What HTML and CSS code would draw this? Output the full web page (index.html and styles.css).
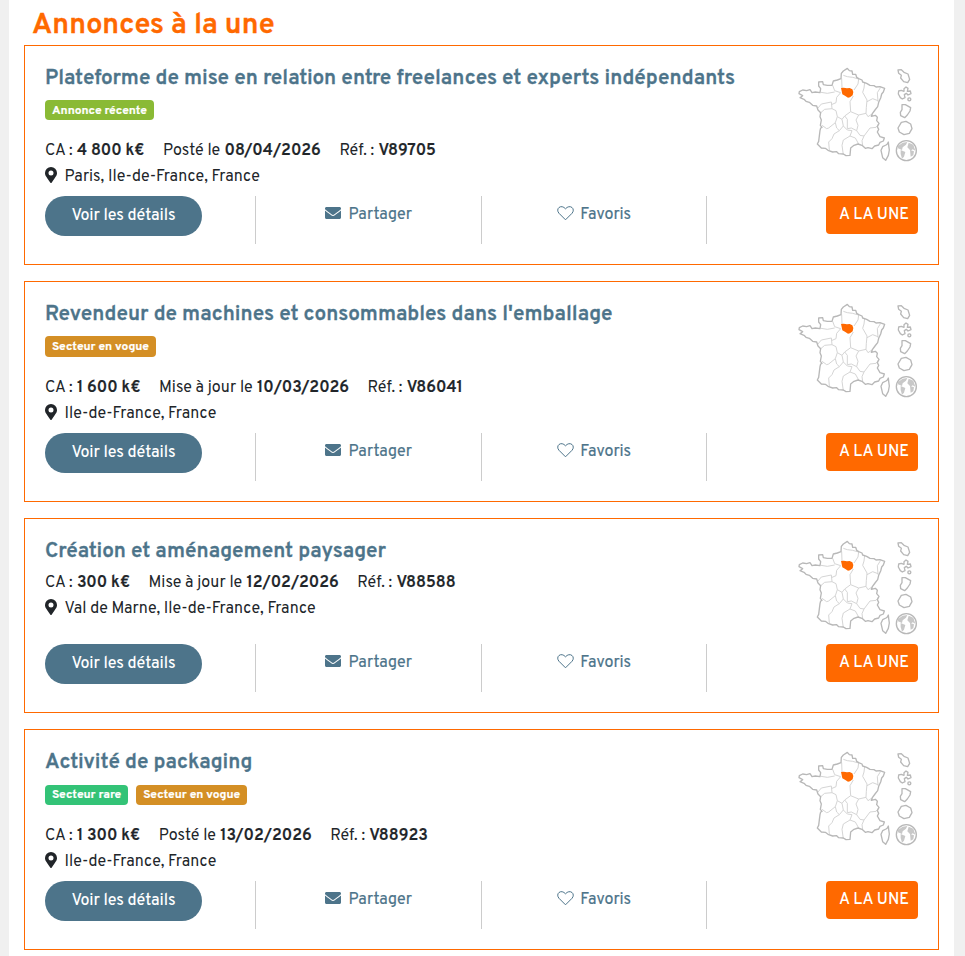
FILE: index.html
```
<!DOCTYPE html>
<html lang="fr">
<head>
    <meta charset="UTF-8">
    <meta name="viewport" content="width=device-width, initial-scale=1.0">
    <title>Annonces à la une</title>
    <link rel="stylesheet" href="styles.css">
</head>
<body>
    <svg class="sprite" aria-hidden="true">
        <symbol id="map" viewBox="24 15 360 300">
            <g class="regions">
                <path d="M160 46L172 50 188 52 206 57 204 72 192 90M155 56L156 84M224 67L222 84 218 97 231 120 229 142 228 160M231 125L248 116 264 122M272 82L262 98 264 125M190 108L180 125 182 155 206 165 228 160 234 170 246 162"/>
                <path d="M128 76L134 92 152 98 140 112 138 128 124 134M93 97L112 100 134 96M84 144L94 132 124 126 126 146 104 148 90 160M126 146L138 152 142 170 136 188 116 204 110 206 96 196M142 170L156 178 164 168 182 155M156 178L160 198 148 212 140 204 136 188M164 168L172 178 172 206 184 204 200 212 204 196 198 180 206 165M148 212L132 222 126 236 116 246 118 270M160 198L172 210 186 212 180 228 160 240 156 256 160 284M200 212L210 226 222 228 216 242 218 256M222 228L240 204 258 202 266 192M180 228L196 234 206 252"/>
            </g>
            <g class="coast">
                <path d="M153 56L154 40 160 33 172 25 178 32 186 33 188 43 197 43 200 52 206 56 216 60 218 66 230 70 240 76 252 77 258 81 270 80 284 85 280 96 275 102 272 114 266 127 263 140 255 150 247 161 244 169 256 166 262 172 260 182 267 190 262 200 266 208 262 216 270 230 283 234 280 243 270 247 266 255 254 258 246 266 234 263 226 265 216 256 204 252 192 256 182 264 180 286 168 287 160 282 146 281 140 275 128 276 114 271 106 265 94 264 82 252 86 244 90 212 92 204 96 202 91 196 94 180 90 170 92 158 84 150 80 138 68 136 58 127 48 124 42 118 30 113 38 107 27 101 28 95 38 90 50 92 60 89 66 98 76 96 90 98 92 86 86 78 86 66 98 65 100 74 112 76 126 76 130 63 142 60z"/>
                <path d="M292 252l3-6 1 10 2 14-3 16-8 15-9-8-5-22 5-11 10-5z"/>
                <path d="M324 30l10-1 8 8 12 5 5 16-6 10-12-3-9-11 2-8-8-6z"/>
                <path d="M342 94l0-8 6-5 6 4-2 9 9-1 2 8-9 4-5-5-6 4 2 9-8 4-6-4-6-11 1-9 8-2z"/>
                <circle cx="358" cy="118" r="4.500"/>
                <path d="M336 134l10 0 16 9-2 10-8 12-8 8-12-6-1-10 5-8z"/>
                <path d="M334 187l14-3 14 8 4 14-8 14-16 4-14-8-4-12z"/>
                <circle cx="349" cy="272" r="30"/>
            </g>
            <path class="land" d="M324 258l14-10 14-2-4 8-10 8-2 8-12-5zM332 270l14 6-4 14-6 6-4-14zM356 248l14 6 6 18-8-4-6 4-10-10zM360 270l12 4-2 12-8 4z"/>
            <path class="idf" d="M153 84l8-1 10 2 8-1 8 4 3 8-2 10-8 6-6 1-8-5-9-5-2-10z"/>
        </symbol>
        <symbol id="pin" viewBox="0 0 384 512">
            <path d="M172 502C27 291 0 270 0 192a192 192 0 1 1 384 0c0 78-27 99-172 310-9 13-31 13-40 0zM192 272a80 80 0 1 0 0-160 80 80 0 0 0 0 160z"/>
        </symbol>
        <symbol id="envelope" viewBox="0 0 512 384">
            <path d="M0 48C0 21 21 0 48 0h416c27 0 48 21 48 48v24C470 106 430 137 344 201c-21 16-58 54-88 54s-67-38-88-54C82 137 42 106 0 72zM0 112c40 32 90 70 149 113 25 19 66 62 107 62s82-43 107-62c59-43 109-81 149-113v224c0 27-21 48-48 48H48c-27 0-48-21-48-48z"/>
        </symbol>
        <symbol id="heart" viewBox="0 0 17 15">
            <path d="M8.5 13.8L2 7.300C.2 5.300.4 2.800 2 1.500 4 0 6.400.5 8.500 2.800 10.600.5 13 0 15 1.500c1.600 1.300 1.800 3.800 0 5.800z"/>
        </symbol>
    </svg>

    <main>
        <h1>Annonces à la une</h1>

        <article class="card">
            <div class="card-top">
                <div class="card-info">
                    <h2>Plateforme de mise en relation entre freelances et experts indépendants</h2>
                    <div class="badges"><span class="badge recent">Annonce récente</span></div>
                    <p class="meta"><span>CA : <b>4 800 k€</b></span><span>Posté le <b>08/04/2026</b></span><span>Réf. : <b>V89705</b></span></p>
                    <p class="place"><svg class="pin"><use href="#pin"/></svg>Paris, Ile-de-France, France</p>
                </div>
                <svg class="map"><use href="#map"/></svg>
            </div>
            <div class="actions">
                <div><a class="details">Voir les détails</a></div>
                <div class="action"><svg class="envelope"><use href="#envelope"/></svg>Partager</div>
                <div class="action"><svg class="heart"><use href="#heart"/></svg>Favoris</div>
                <div class="last"><span class="featured">A LA UNE</span></div>
            </div>
        </article>

        <article class="card tall">
            <div class="card-top">
                <div class="card-info">
                    <h2>Revendeur de machines et consommables dans l'emballage</h2>
                    <div class="badges"><span class="badge vogue">Secteur en vogue</span></div>
                    <p class="meta"><span>CA : <b>1 600 k€</b></span><span>Mise à jour le <b>10/03/2026</b></span><span>Réf. : <b>V86041</b></span></p>
                    <p class="place"><svg class="pin"><use href="#pin"/></svg>Ile-de-France, France</p>
                </div>
                <svg class="map"><use href="#map"/></svg>
            </div>
            <div class="actions">
                <div><a class="details">Voir les détails</a></div>
                <div class="action"><svg class="envelope"><use href="#envelope"/></svg>Partager</div>
                <div class="action"><svg class="heart"><use href="#heart"/></svg>Favoris</div>
                <div class="last"><span class="featured">A LA UNE</span></div>
            </div>
        </article>

        <article class="card short">
            <div class="card-top">
                <div class="card-info">
                    <h2>Création et aménagement paysager</h2>
                    <p class="meta"><span>CA : <b>300 k€</b></span><span>Mise à jour le <b>12/02/2026</b></span><span>Réf. : <b>V88588</b></span></p>
                    <p class="place"><svg class="pin"><use href="#pin"/></svg>Val de Marne, Ile-de-France, France</p>
                </div>
                <svg class="map"><use href="#map"/></svg>
            </div>
            <div class="actions">
                <div><a class="details">Voir les détails</a></div>
                <div class="action"><svg class="envelope"><use href="#envelope"/></svg>Partager</div>
                <div class="action"><svg class="heart"><use href="#heart"/></svg>Favoris</div>
                <div class="last"><span class="featured">A LA UNE</span></div>
            </div>
        </article>

        <article class="card tall">
            <div class="card-top">
                <div class="card-info">
                    <h2>Activité de packaging</h2>
                    <div class="badges two"><span class="badge rare">Secteur rare</span><span class="badge vogue">Secteur en vogue</span></div>
                    <p class="meta"><span>CA : <b>1 300 k€</b></span><span>Posté le <b>13/02/2026</b></span><span>Réf. : <b>V88923</b></span></p>
                    <p class="place"><svg class="pin"><use href="#pin"/></svg>Ile-de-France, France</p>
                </div>
                <svg class="map"><use href="#map"/></svg>
            </div>
            <div class="actions">
                <div><a class="details">Voir les détails</a></div>
                <div class="action"><svg class="envelope"><use href="#envelope"/></svg>Partager</div>
                <div class="action"><svg class="heart"><use href="#heart"/></svg>Favoris</div>
                <div class="last"><span class="featured">A LA UNE</span></div>
            </div>
        </article>
    </main>
</body>
</html>
```
FILE: styles.css
```
* {
    margin: 0;
    padding: 0;
    box-sizing: border-box;
}

body {
    font-family: Overpass, Roboto, sans-serif;
    font-size: 16px;
    line-height: 26px;
    color: #212529;
    background-color: #f0f0f0;
}

.sprite {
    display: none;
}

main {
    width: 945px;
    height: 956px;
    margin-left: 9px;
    padding: 4px 15px 0;
    background-color: #fff;
    overflow: hidden;
}

h1 {
    height: 41px;
    padding-left: 8px;
    font-size: 28.8px;
    font-weight: 600;
    line-height: 44px;
    color: #ff6900;
    -webkit-text-stroke: 0.4px;
}

.card {
    height: 220px;
    margin-bottom: 16px;
    padding: 20px;
    border: 1px solid #ff6900;
}

.card.tall {
    height: 221px;
}

.card.short {
    height: 195px;
}

.card-top {
    display: flex;
    justify-content: space-between;
    height: 130px;
}

.tall .card-top {
    height: 131px;
}

.short .card-top {
    height: 105px;
}

h2 {
    height: 34px;
    font-size: 20.8px;
    font-weight: 600;
    line-height: 26px;
    white-space: nowrap;
    color: #4d748a;
    -webkit-text-stroke: 0.3px;
}

.short h2 {
    height: 31px;
}

.badges {
    display: flex;
    gap: 8px;
    height: 38px;
}

.tall .badges {
    height: 39px;
}

.badge {
    height: 20px;
    padding: 0 7px;
    border-radius: 4px;
    font-size: 12px;
    font-weight: 700;
    line-height: 22px;
    letter-spacing: -0.06px;
    color: #fff;
    -webkit-text-stroke: 0.2px;
}

.tall .badge {
    height: 21px;
}

.two .badge {
    height: 20px;
    margin-top: 1px;
    line-height: 20px;
}

.recent {
    background-color: #8aba35;
}

.vogue {
    background-color: #d48f25;
}

.rare {
    background-color: #33c377;
}

.meta {
    display: flex;
    gap: 18.5px;
    white-space: nowrap;
}

.meta b {
    margin-left: 0.5px;
    font-weight: 600;
    -webkit-text-stroke: 0.2px;
}

.place {
    display: flex;
    align-items: center;
}

.pin {
    width: 12px;
    height: 16px;
    margin: 0 7.5px 4px 0;
    fill: #212529;
}

.map {
    width: 120px;
    height: 100px;
    margin-top: -1px;
}

.coast {
    fill: none;
    stroke: #b8b8b8;
    stroke-width: 4;
    stroke-linejoin: round;
}

.regions {
    fill: none;
    stroke: #d5d5d5;
    stroke-width: 3;
}

.land {
    fill: #c8c8c8;
}

.idf {
    fill: #ff6900;
}

.actions {
    display: grid;
    grid-template-columns: 210px 226px 225px 212px;
    height: 48px;
}

.details {
    display: block;
    width: 157px;
    height: 40px;
    border-radius: 20px;
    font-weight: 500;
    line-height: 40px;
    letter-spacing: -0.08px;
    text-align: center;
    color: #fff;
    background-color: #4d748a;
}

.action {
    display: flex;
    justify-content: center;
    align-items: center;
    height: 48px;
    padding-bottom: 10px;
    border-left: 1px solid #ccc;
    color: #4d748a;
    -webkit-text-stroke: 0.2px;
}

.envelope {
    width: 16px;
    height: 12px;
    margin: 0 7.5px 4px 0;
    fill: #4d748a;
}

.heart {
    width: 17px;
    height: 15px;
    margin: 0 6.5px 4px 0;
    fill: none;
    stroke: #4d748a;
}

.last {
    display: flex;
    justify-content: flex-end;
    border-left: 1px solid #ccc;
}

.featured {
    width: 92px;
    height: 38px;
    padding-left: 4px;
    border-radius: 4px;
    font-weight: 500;
    line-height: 38px;
    text-align: center;
    color: #fff;
    background-color: #ff6900;
}
```
